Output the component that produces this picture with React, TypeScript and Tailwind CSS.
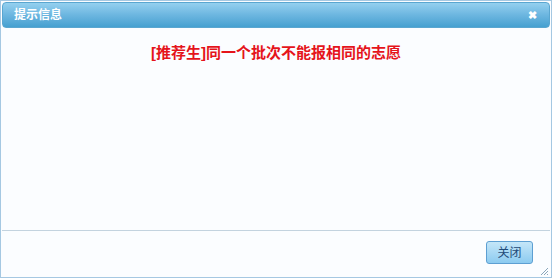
import React from "react";

const cjk = '"Liberation Sans", "Noto Sans CJK SC", sans-serif';

export default function App() {
  return (
    <div
      className="w-[554px] h-[279px] bg-white"
      style={{ fontFamily: cjk }}
    >
      <div className="w-[552px] h-[278px] border border-[#a5c8e2] bg-[#fbfdff] flex flex-col px-[1px] pt-[1px]">
        <div className="h-[26px] rounded-[4px] bg-gradient-to-b from-[#94d0ef] via-[#6cb6e0] to-[#45a0d0] border border-[#5aa6d0] flex items-center justify-between pl-[11px] pr-[12px]">
          <span className="text-white text-[12px] font-bold leading-none">提示信息</span>
          <span className="text-white text-[11px] font-bold leading-none">✖</span>
        </div>
        <div className="flex-1 flex justify-center pt-[15px]">
          <span className="text-[#e5141b] text-[15px] font-bold leading-[20px]">
            [推荐生]同一个批次不能报相同的志愿
          </span>
        </div>
        <div className="h-[47px] border-t border-[#c3d3df] relative flex justify-end items-start pt-[10px] pr-[17px]">
          <button className="w-[47px] h-[23px] rounded-[3px] border border-[#5d9fd2] bg-gradient-to-b from-[#c4e6f8] to-[#8ccbf0] text-[12px] text-[#1f4a78] leading-none">
            关闭
          </button>
          <svg className="absolute right-[1px] bottom-[1px]" width="10" height="10" viewBox="0 0 10 10">
            <path d="M9 2 L2 9 M9 5 L5 9 M9 8 L8 9" stroke="#8aa6bb" strokeWidth="1" />
          </svg>
        </div>
      </div>
    </div>
  );
}
